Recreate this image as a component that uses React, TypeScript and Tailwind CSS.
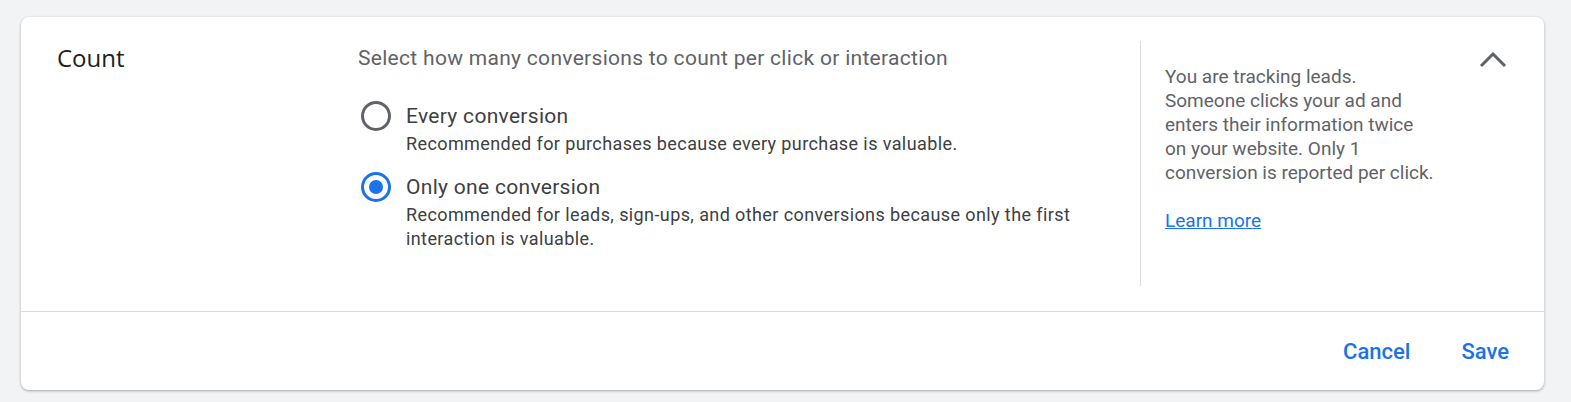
import React, { useState } from 'react';

type CountMode = 'every' | 'one';

interface RadioOptionProps {
    checked: boolean;
    label: string;
    children: React.ReactNode;
    onSelect: () => void;
}

const RadioOption: React.FC<RadioOptionProps> = ({ checked, label, children, onSelect }) => (
    <button type="button" onClick={onSelect} className="flex items-start text-left cursor-pointer ml-[3px]">
        <span className="h-[28px] flex items-center shrink-0">
            <span
                className={
                    checked
                        ? 'w-[30px] h-[30px] rounded-full border-[3px] border-[#1a73e8] flex items-center justify-center'
                        : 'w-[30px] h-[30px] rounded-full border-[3px] border-[#5f6368] flex items-center justify-center'
                }
            >
                {checked ? <span className="w-[14px] h-[14px] rounded-full bg-[#1a73e8]" /> : null}
            </span>
        </span>
        <span className="ml-[15px] flex flex-col">
            <span className="text-[21px] leading-[28px] tracking-[0.3px] text-[#3c4043]">{label}</span>
            <span className="text-[18px] leading-[24px] tracking-[0.4px] text-[#3c4043] mt-[2px]">{children}</span>
        </span>
    </button>
);

export default function App() {
    const [mode, setMode] = useState<CountMode>('one');

    return (
        <div className="w-full h-[402px] bg-[#f1f3f4] pt-[17px] px-[21px] font-['Roboto',sans-serif]">
            <div className="w-[1523px] bg-white rounded-[8px] shadow-[0_1px_3px_rgba(60,64,67,0.3),0_1px_2px_rgba(60,64,67,0.15)]">
                <div className="flex pt-[24px] pb-[25px] h-[294px]">
                    <div className="w-[337px] pl-[36px] pt-[2px] shrink-0">
                        <h3 className="font-['Open_Sans',sans-serif] text-[24px] leading-[30px] text-[#202124]">Count</h3>
                    </div>

                    <div className="flex-1 pt-[2px]">
                        <p className="text-[21px] leading-[30px] tracking-[0.3px] text-[#5f6368]">
                            Select how many conversions to count per click or interaction
                        </p>
                        <div className="mt-[29px] flex flex-col gap-[17px]">
                            <RadioOption checked={mode === 'every'} label="Every conversion" onSelect={() => setMode('every')}>
                                Recommended for purchases because every purchase is valuable.
                            </RadioOption>
                            <RadioOption checked={mode === 'one'} label="Only one conversion" onSelect={() => setMode('one')}>
                                Recommended for leads, sign-ups, and other conversions because only the first
                                <br />
                                interaction is valuable.
                            </RadioOption>
                        </div>
                    </div>

                    <div className="w-[404px] shrink-0 border-l border-[#dadce0] flex items-start pl-[24px] pr-[37px]">
                        <div className="flex-1 pt-[24px] text-[19px] leading-[24px] text-[#5f6368]">
                            <p>
                                You are tracking leads.
                                <br />
                                Someone clicks your ad and
                                <br />
                                enters their information twice
                                <br />
                                on your website. Only 1
                                <br />
                                conversion is reported per click.
                            </p>
                            <a href="#" className="inline-block mt-[24px] text-[#1a73e8] underline">
                                Learn more
                            </a>
                        </div>
                        <button type="button" className="mt-[11px] shrink-0" aria-label="Collapse">
                            <svg width="28" height="16" viewBox="0 0 28 16" fill="none">
                                <polyline points="2,14 14,2 26,14" stroke="#5f6368" strokeWidth="3" />
                            </svg>
                        </button>
                    </div>
                </div>

                <div className="h-[79px] border-t border-[#dadce0] flex items-center justify-end gap-[51px] pr-[35px]">
                    <button type="button" className="text-[22px] font-medium text-[#1a73e8]">Cancel</button>
                    <button type="button" className="text-[22px] font-medium text-[#1a73e8]">Save</button>
                </div>
            </div>
        </div>
    );
}
